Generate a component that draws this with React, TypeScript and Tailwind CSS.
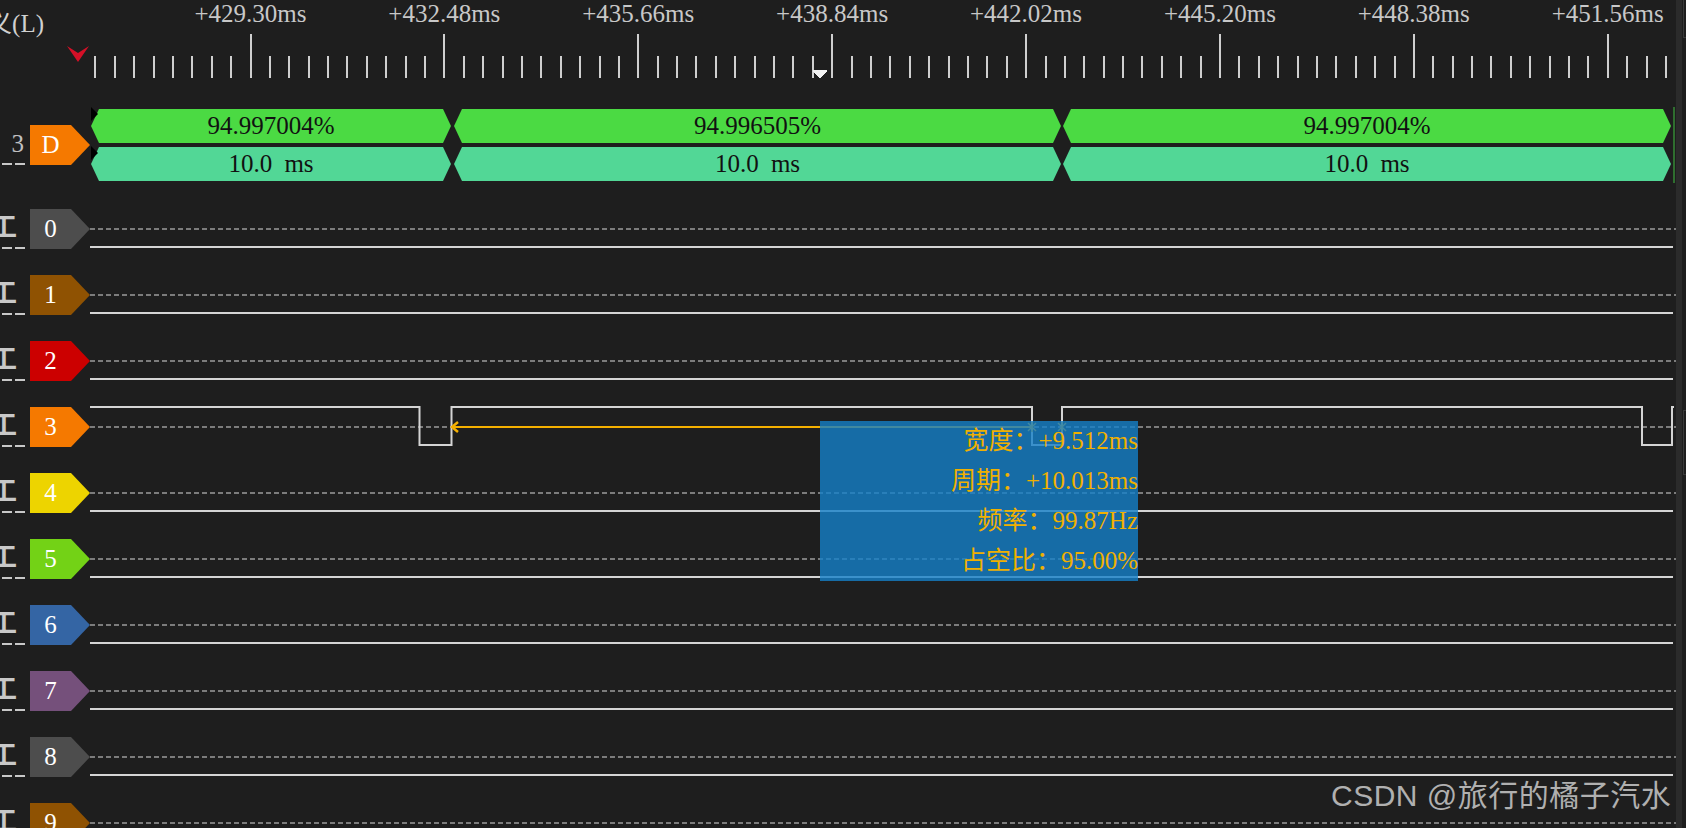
import React from 'react';

const RULER_LABELS = ['+429.30ms', '+432.48ms', '+435.66ms', '+438.84ms', '+442.02ms', '+445.20ms', '+448.38ms', '+451.56ms'];

// ruler ticks: 10 minor divisions between labelled majors
const TICKS = Array.from({ length: 82 }, (_, i) => ({
  x: 5.4 + 19.39 * i,
  major: i % 10 === 8,
}));

const CHANNELS = [
  { n: '0', color: 'bg-[#4d4d4d]' },
  { n: '1', color: 'bg-[#8f5202]' },
  { n: '2', color: 'bg-[#cc0000]' },
  { n: '3', color: 'bg-[#f57900]' },
  { n: '4', color: 'bg-[#edd400]' },
  { n: '5', color: 'bg-[#73d216]' },
  { n: '6', color: 'bg-[#3465a4]' },
  { n: '7', color: 'bg-[#75507b]' },
  { n: '8', color: 'bg-[#4d4d4d]' },
  { n: '9', color: 'bg-[#8f5202]' },
];

const SEGMENTS = [
  { duty: '94.997004%', period: '10.0 ms', cls: 'w-[360px] ml-[1px]' },
  { duty: '94.996505%', period: '10.0 ms', cls: 'w-[607px] ml-[3px]' },
  { duty: '94.997004%', period: '10.0 ms', cls: 'w-[608px] ml-[2px]' },
];

const MEASURE = ['宽度：+9.512ms', '周期：+10.013ms', '频率：99.87Hz', '占空比：95.00%'];

const Tag: React.FC<{ label: string; color: string }> = ({ label, color }) => (
  <div className={`${color} flex h-[40px] w-[60px] shrink-0 [clip-path:polygon(0_0,41px_0,100%_50%,41px_100%,0_100%)]`}>
    <span className="w-[41px] text-center leading-[40px] text-white">{label}</span>
  </div>
);

const Underline = () => (
  <div className="h-[2px] w-[25px] bg-[repeating-linear-gradient(90deg,transparent_0_2px,#c8c8c8_2px_12px,transparent_12px_12.5px)]" />
);

const ChannelRow: React.FC<{ n: string; color: string; pulses: boolean }> = ({ n, color, pulses }) => (
  <div className="flex h-[66px] shrink-0 items-center">
    <div className="flex w-[90px] shrink-0 items-center">
      <div className="flex h-[40px] w-[26px] flex-col justify-between">
        <div className="flex h-[38px] w-[26px] overflow-hidden leading-[38px] text-[#c8c8c8]">
          <span className="-ml-[9px] text-[26px] font-bold">工</span>
        </div>
        <Underline />
      </div>
      <div className="ml-[4px]">
        <Tag label={n} color={color} />
      </div>
    </div>
    <svg width={1586} height={66} className="block shrink-0">
      <line x1={0} y1={33} x2={1586} y2={33} stroke="#7c7c7c" strokeWidth={2} strokeDasharray="5 3" />
      {pulses ? (
        <>
          <path
            d="M0 13 H329.5 V51 H361.5 V13 H942 V51 H972 V13 H1552 V51 H1582 V13 H1584"
            fill="none"
            stroke="#d4d4d4"
            strokeWidth={2}
          />
          <line x1={362} y1={33} x2={942} y2={33} stroke="#f5b000" strokeWidth={2} />
          <polyline points="368,28 362,33 368,38" fill="none" stroke="#f5b000" strokeWidth={2.5} />
          {[942, 972].map((x) => (
            <g key={x} stroke="#f5b000" strokeWidth={1.5}>
              <line x1={x - 4} y1={29} x2={x + 4} y2={37} />
              <line x1={x + 4} y1={29} x2={x - 4} y2={37} />
              <line x1={x} y1={28} x2={x} y2={38} />
            </g>
          ))}
        </>
      ) : (
        <line x1={0} y1={51} x2={1583} y2={51} stroke="#d4d4d4" strokeWidth={2} />
      )}
    </svg>
  </div>
);

export default function App() {
  return (
    <div className="relative flex h-[828px] w-[1686px] overflow-hidden bg-[#1e1e1e] font-['Liberation_Serif','Noto_Sans_CJK_SC',serif] text-[25px]">
      <div className="flex w-[1676px] shrink-0 flex-col">
        {/* time ruler */}
        <div className="flex h-[100px] shrink-0">
          <div className="flex w-[90px] shrink-0 flex-col">
            <div className="mt-[9px] flex h-[30px] w-[44px] justify-end overflow-hidden whitespace-nowrap leading-[30px] text-[#d0d0d0]">
              <span>定义(L)</span>
            </div>
            <svg width={22} height={16} className="ml-[67px] mt-[7px] block">
              <polygon points="0,0 11,7 22,0 11,16" fill="#d41027" />
            </svg>
          </div>
          <div className="flex w-[1586px] shrink-0 flex-col">
            <div className="flex h-[26px] pl-[63.5px] pt-[1px]">
              {RULER_LABELS.map((t) => (
                <span key={t} className="w-[193.9px] shrink-0 whitespace-nowrap text-center leading-[25px] text-[#c8c8c8]">
                  {t}
                </span>
              ))}
            </div>
            <svg width={1586} height={74} className="block" shapeRendering="crispEdges">
              {TICKS.map((t, i) => (
                <rect key={i} x={t.x - 1} y={t.major ? 8 : 30} width={2} height={t.major ? 44 : 22} fill="#cfcfcf" />
              ))}
              <polygon points="723,44 737,44 737,46 730,52 723,46" fill="#f2f2f2" />
            </svg>
          </div>
        </div>

        {/* decoder row */}
        <div className="flex h-[96px] shrink-0">
          <div className="flex w-[90px] shrink-0 items-start pt-[25px]">
            <div className="flex h-[40px] w-[26px] flex-col justify-between">
              <span className="w-[24px] text-right leading-[38px] text-[#c0c0c0]">3</span>
              <Underline />
            </div>
            <div className="ml-[4px]">
              <Tag label="D" color="bg-[#f57900]" />
            </div>
          </div>
          <div className="relative flex w-[1586px] shrink-0 pt-[9px]">
            <div className="flex flex-col gap-[4px]">
              <div className="flex h-[34px]">
                {SEGMENTS.map((s, i) => (
                  <div
                    key={i}
                    className={`${s.cls} h-[34px] bg-[#4bda43] text-center leading-[34px] text-[#111] [clip-path:polygon(8px_0,calc(100%_-_8px)_0,100%_50%,calc(100%_-_8px)_100%,8px_100%,0_50%)]`}
                  >
                    {s.duty}
                  </div>
                ))}
              </div>
              <div className="flex h-[34px]">
                {SEGMENTS.map((s, i) => (
                  <div
                    key={i}
                    className={`${s.cls} h-[34px] bg-[#52d796] text-center leading-[34px] text-[#111] [word-spacing:6px] [clip-path:polygon(8px_0,calc(100%_-_8px)_0,100%_50%,calc(100%_-_8px)_100%,8px_100%,0_50%)]`}
                  >
                    {s.period}
                  </div>
                ))}
              </div>
            </div>
            <div className="-mt-[2px] ml-[2px] h-[76px] w-[2px] bg-[#2f6e2f]" />
            {/* start markers on the first segment */}
            <svg width={8} height={14} className="absolute left-[1px] top-[7px]">
              <polygon points="0,0 7,7 0,14" fill="#000" />
            </svg>
            <svg width={8} height={14} className="absolute left-[1px] top-[46px]">
              <polygon points="0,0 7,7 0,14" fill="#000" />
            </svg>
          </div>
        </div>

        {CHANNELS.map((c) => (
          <ChannelRow key={c.n} n={c.n} color={c.color} pulses={c.n === '3'} />
        ))}
      </div>

      {/* right edge / scrollbar */}
      <div className="flex w-[10px] shrink-0">
        <div className="w-[6px] bg-[#2b2b2b]" />
        <div className="flex w-[4px] flex-col">
          <div className="ml-[1px] h-[38px] border-b border-l border-[#3a3a3a]" />
          <div className="h-[372px]" />
          <div className="ml-[1px] h-[65px] border-y border-l border-[#3a3a3a]" />
        </div>
      </div>

      {/* measurement popup */}
      <div className="absolute left-[820px] top-[421px] flex h-[160px] w-[318px] flex-col items-end bg-[rgba(20,128,200,0.8)] text-[#f0b000]">
        {MEASURE.map((m) => (
          <div key={m} className="h-[40px] whitespace-nowrap leading-[40px]">
            {m}
          </div>
        ))}
      </div>

      {/* watermark */}
      <div className="absolute left-[1331px] top-[781px] whitespace-nowrap font-['Liberation_Sans','Noto_Sans_CJK_SC',sans-serif] text-[30px] leading-[30px] tracking-[0.5px] text-[#b0b0b0]">
        CSDN @旅行的橘子汽水
      </div>
    </div>
  );
}
